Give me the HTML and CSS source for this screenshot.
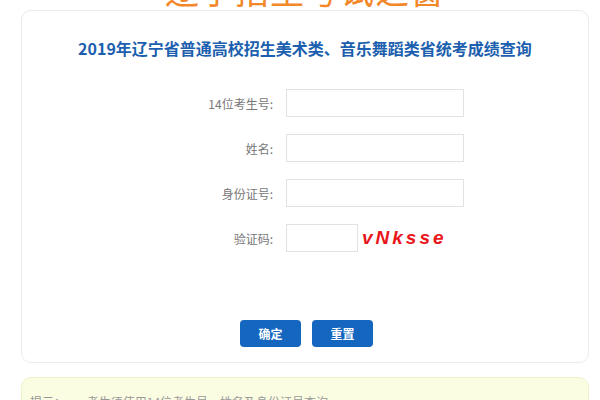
FILE: index.html
```html
<!DOCTYPE html>
<html lang="zh-CN">
<head>
  <meta charset="UTF-8">
  <title>成绩查询</title>
  <link rel="stylesheet" href="styles.css">
</head>
<body>
  <div class="pagina">
    <h1 class="logo">辽宁招生考试之窗</h1>

    <!-- 查询表单 -->
    <form class="caja-consulta">
      <h2>2019年辽宁省普通高校招生美术类、音乐舞蹈类省统考成绩查询</h2>

      <div class="fila">
        <label for="ksh">14位考生号:</label>
        <input type="text" id="ksh" maxlength="14">
      </div>
      <div class="fila">
        <label for="xm">姓名:</label>
        <input type="text" id="xm">
      </div>
      <div class="fila">
        <label for="sfz">身份证号:</label>
        <input type="text" id="sfz">
      </div>
      <div class="fila">
        <label for="yzm">验证码:</label>
        <input type="text" id="yzm" class="corto">
        <span class="captcha">vNksse</span>
      </div>

      <div class="botones">
        <button type="button">确定</button>
        <button type="reset">重置</button>
      </div>
    </form>

    <div class="aviso">
      <span class="aviso-titulo">提示：</span>
      <span>考生须使用14位考生号、姓名及身份证号查询。</span>
    </div>
  </div>
</body>
</html>
```

FILE: styles.css
```css
body {
  margin: 0;
  background: #fff;
  font-family: "Noto Sans CJK SC", "Microsoft YaHei", sans-serif;
}
.pagina {
  padding: 0 11px 0 21px;
  overflow: hidden;
}
.logo {
  margin: -30px 0 0;
  height: 40px;
  line-height: 40px;
  text-align: center;
  font-size: 34px;
  font-weight: normal;
  color: #f2882a;
  letter-spacing: 1px;
}
.caja-consulta {
  width: 566px;
  border: 1px solid #ebebeb;
  border-radius: 10px;
  background: #fff;
  padding: 24px 0 15px;
}
h2 {
  margin: 0 0 28px;
  text-align: center;
  font-size: 16px;
  line-height: 26px;
  color: #1c5fae;
  font-weight: bold;
}
.fila {
  display: flex;
  align-items: center;
  margin-bottom: 17px;
}
.fila label {
  width: 264px;
  padding-right: 13px;
  box-sizing: border-box;
  text-align: right;
  font-size: 12px;
  color: #777;
}
.fila input {
  width: 178px;
  height: 28px;
  box-sizing: border-box;
  border: 1px solid #e2e2e2;
  outline: none;
  margin: 0;
}
.fila input.corto {
  width: 72px;
}
.captcha {
  margin-left: 4px;
  font-family: "Liberation Sans", Arial, sans-serif;
  font-size: 19px;
  font-weight: bold;
  font-style: italic;
  letter-spacing: 3px;
  color: #e8161b;
}
.botones {
  display: flex;
  justify-content: flex-start;
  gap: 11px;
  padding-left: 218px;
  margin-top: 68px;
}
.botones button {
  width: 61px;
  height: 27px;
  border: none;
  border-radius: 4px;
  background: #1466bf;
  color: #fff;
  font-size: 12px;
  font-weight: bold;
  font-family: inherit;
  cursor: pointer;
}
.aviso {
  margin-top: 14px;
  width: 548px;
  height: 60px;
  padding: 15px 10px 12px 8px;
  border: 1px solid #eef3c8;
  border-radius: 10px;
  background: #fbfde3;
  font-size: 12px;
  color: #999;
}
.aviso-titulo {
  margin-right: 18px;
}
```
